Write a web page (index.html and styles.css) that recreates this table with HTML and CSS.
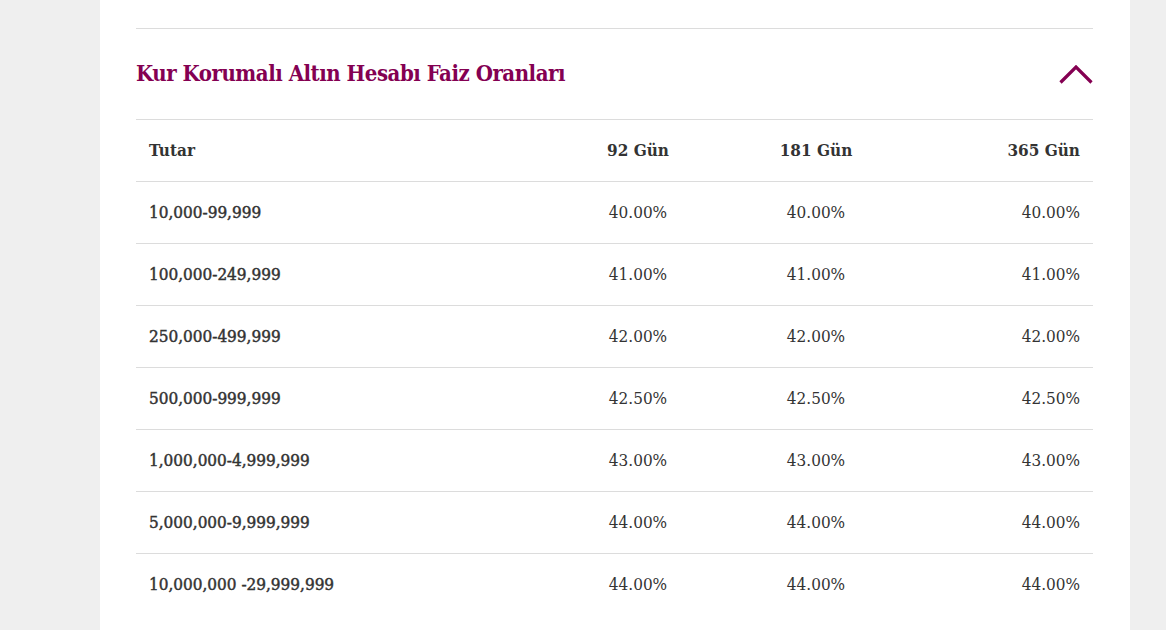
FILE: index.html
```html
<!DOCTYPE html>
<html lang="tr">
<head>
<meta charset="utf-8">
<title>Kur Korumalı Altın Hesabı Faiz Oranları</title>
<link rel="stylesheet" href="styles.css">
</head>
<body>
<div class="panel">
  <section class="accordion">
    <div class="acc-head">
      <h2 class="acc-title">Kur Korumalı Altın Hesabı Faiz Oranları</h2>
      <svg class="chevron" width="34" height="19" viewBox="0 0 34 19" aria-hidden="true">
        <polyline points="1.5,17.5 17,2 32.5,17.5" fill="none" stroke="#840052" stroke-width="3.2"/>
      </svg>
    </div>
    <table class="rates">
      <colgroup>
        <col class="c1"><col class="c2"><col class="c3"><col class="c4">
      </colgroup>
      <thead>
        <tr><th class="left">Tutar</th><th class="mid">92 Gün</th><th class="mid">181 Gün</th><th class="right">365 Gün</th></tr>
      </thead>
      <tbody>
        <tr><td class="left amt">10,000-99,999</td><td class="mid">40.00%</td><td class="mid">40.00%</td><td class="right">40.00%</td></tr>
        <tr><td class="left amt">100,000-249,999</td><td class="mid">41.00%</td><td class="mid">41.00%</td><td class="right">41.00%</td></tr>
        <tr><td class="left amt">250,000-499,999</td><td class="mid">42.00%</td><td class="mid">42.00%</td><td class="right">42.00%</td></tr>
        <tr><td class="left amt">500,000-999,999</td><td class="mid">42.50%</td><td class="mid">42.50%</td><td class="right">42.50%</td></tr>
        <tr><td class="left amt">1,000,000-4,999,999</td><td class="mid">43.00%</td><td class="mid">43.00%</td><td class="right">43.00%</td></tr>
        <tr><td class="left amt">5,000,000-9,999,999</td><td class="mid">44.00%</td><td class="mid">44.00%</td><td class="right">44.00%</td></tr>
        <tr><td class="left amt">10,000,000 -29,999,999</td><td class="mid">44.00%</td><td class="mid">44.00%</td><td class="right">44.00%</td></tr>
      </tbody>
    </table>
  </section>
</div>
</body>
</html>
```
FILE: styles.css
```css
html, body {
  margin: 0;
  padding: 0;
  background: #efefef;
  height: 100%;
  overflow: hidden;
}
body {
  font-family: "DejaVu Serif Condensed", "DejaVu Serif", "Liberation Serif", serif;
  font-stretch: condensed;
  color: #333333;
}
.panel {
  margin-left: 100px;
  width: 957px;
  padding: 28px 37px 40px 36px;
  background: #ffffff;
  min-height: 700px;
}
.accordion {
  border-top: 1px solid #dcdcdc;
}
.acc-head {
  height: 90px;
  display: flex;
  align-items: center;
  justify-content: space-between;
}
.acc-title {
  margin: 0 0 3px 0;
  font-size: 22px;
  line-height: 28px;
  font-weight: bold;
  color: #840052;
  letter-spacing: -0.48px;
}
.chevron {
  display: block;
  margin-top: 0;
}
.rates {
  width: 100%;
  border-collapse: collapse;
  table-layout: fixed;
  border-top: 1px solid #dcdcdc;
}
.c1 { width: 424px; }
.c2 { width: 156px; }
.c3 { width: 200px; }
.c4 { width: 177px; }
.rates th, .rates td {
  height: 62px;
  padding: 0 13px 2px 13px;
  box-sizing: border-box;
  font-size: 17px;
  line-height: 20px;
  vertical-align: middle;
  white-space: nowrap;
}
.rates thead th {
  font-weight: bold;
  border-bottom: 1px solid #dcdcdc;
}
.rates tbody tr {
  border-bottom: 1px solid #dcdcdc;
}
.rates tbody tr:last-child {
  border-bottom: none;
}
.rates td {
  font-weight: normal;
}
.rates td.amt {
  -webkit-text-stroke: 0.45px #333333;
}
.left { text-align: left; }
.mid { text-align: center; }
.right { text-align: right; }
```
